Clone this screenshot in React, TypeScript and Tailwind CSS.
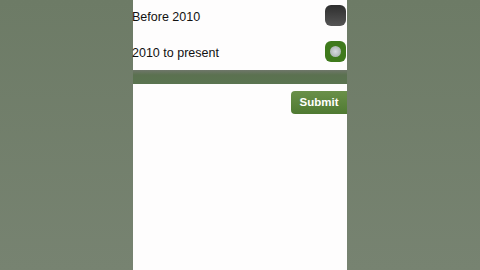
export default function App() {
  return (
    <div className="w-[480px] h-[270px] overflow-hidden bg-[linear-gradient(#6d7b66,#778371)] flex justify-center" style={{ fontFamily: '"Liberation Sans", Arial, sans-serif' }}>
      <div className="w-[214px] flex flex-col">
        <div className="bg-[#fefdfd] h-[70px] flex flex-col">
          <div className="h-[34px] flex items-center justify-between">
            <span className="text-[12.5px] text-[#111] -ml-[1px]">Before 2010</span>
            <div className="w-[21px] h-[21px] rounded-[6px] bg-[linear-gradient(#2e2e2e,#555)] mr-[1px] mt-[-3px]" />
          </div>
          <div className="h-[36px] flex items-center justify-between">
            <span className="text-[12.5px] text-[#111] -ml-[1px] mt-[2px]">2010 to present</span>
            <div className="w-[21px] h-[21px] rounded-[6px] bg-[#3f7a1c] mr-[1px] mt-[-2px] flex items-center justify-center">
              <div className="w-[11px] h-[11px] rounded-full bg-[radial-gradient(#d8dbe0,#9ca8a0)]" />
            </div>
          </div>
        </div>
        <div className="h-[14px] bg-[linear-gradient(#6f776a,#5b7150_35%,#5a7450)]" />
        <div className="flex-1 bg-[#fefdfd] flex flex-col items-end pt-[7px]">
          <div className="w-[56px] h-[23px] rounded-l-[4px] bg-[linear-gradient(#6a9049,#4f7a32)] flex items-center justify-center">
            <span className="text-white font-bold text-[11.5px]">Submit</span>
          </div>
        </div>
      </div>
    </div>
  );
}
